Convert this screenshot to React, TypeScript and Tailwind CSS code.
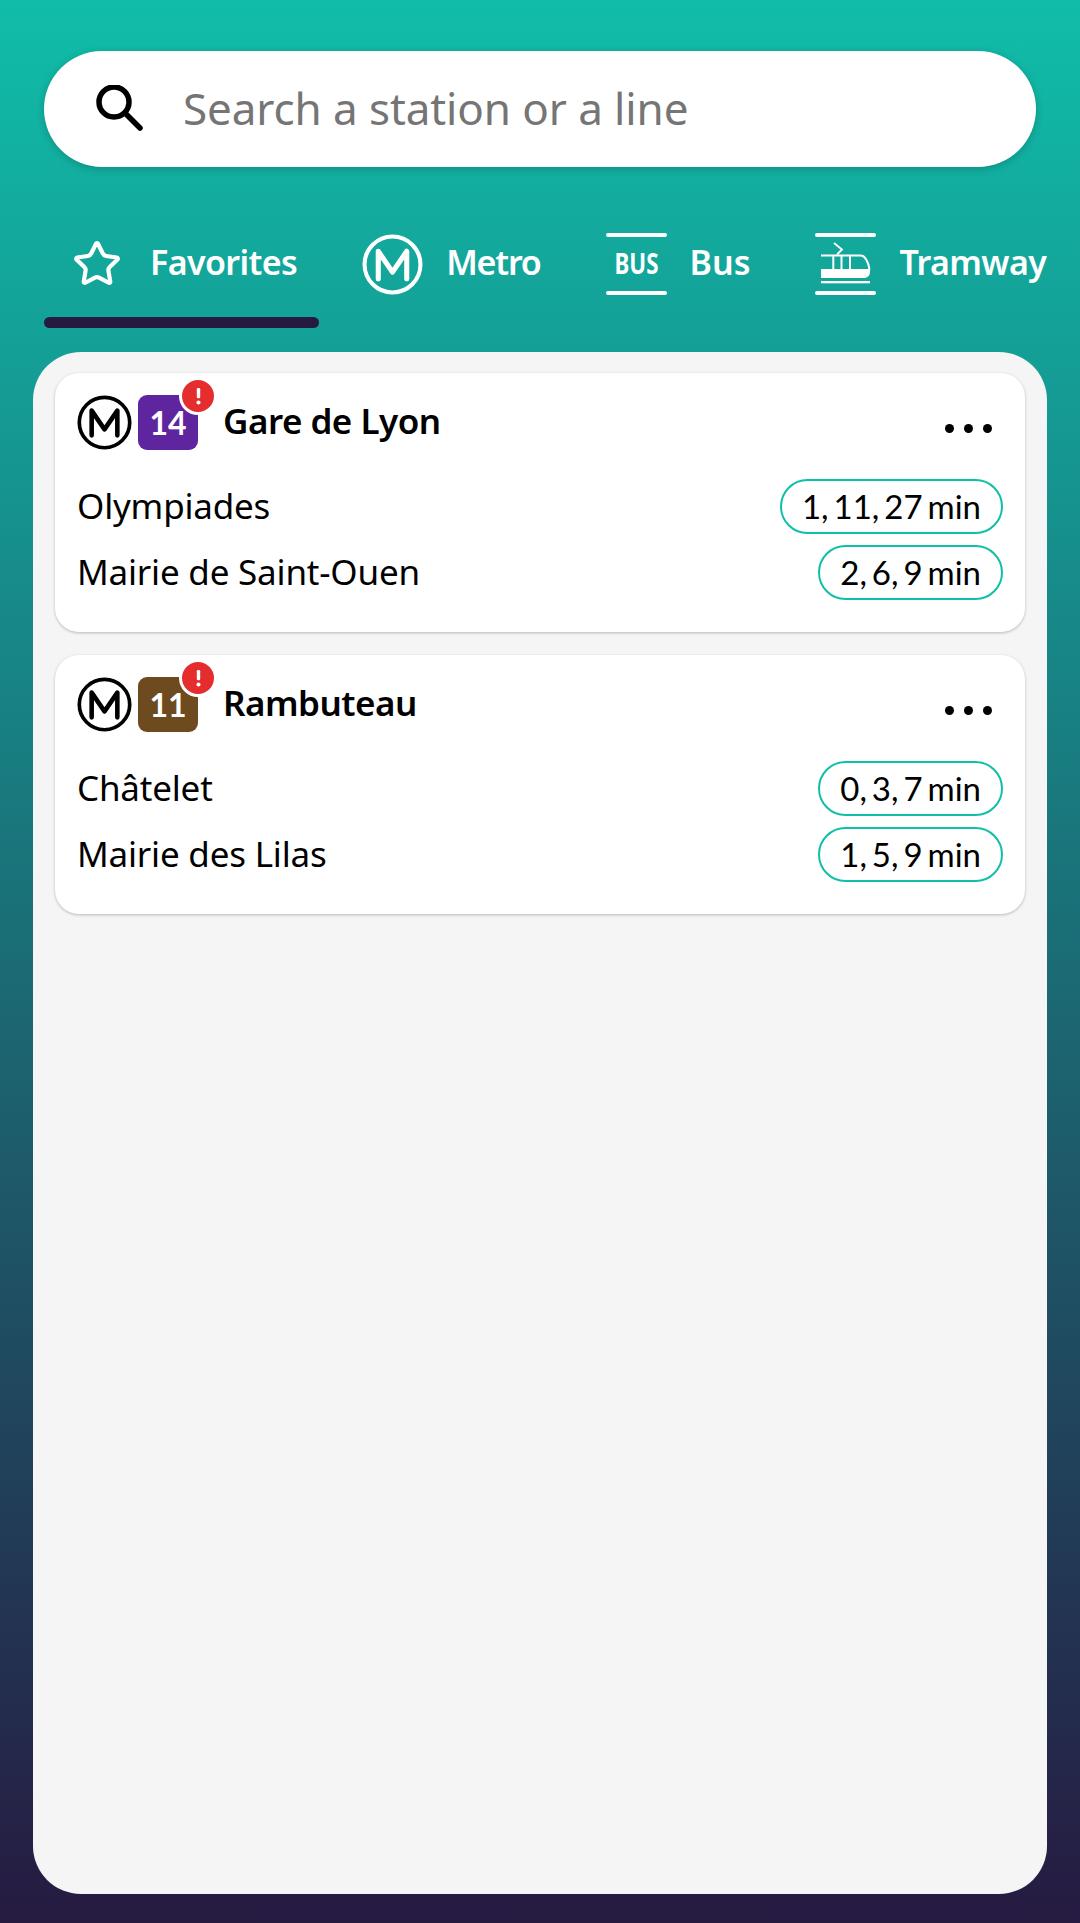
import { Star } from "lucide-react";

const MIcon = ({ color, size }: { color: string; size: number }) => (
  <svg width={size} height={size} viewBox="0 0 60 60" fill="none" className="shrink-0">
    <circle cx="30" cy="30" r="27.500" stroke={color} strokeWidth="4" />
    <path d="M16 44V17L30 37.500 44 17V44" stroke={color} strokeWidth="5" strokeLinecap="round" strokeLinejoin="round" />
  </svg>
);

const Bars = () => (
  <>
    <rect x="0" y="0" width="61" height="4" rx="2" fill="white" />
    <rect x="0" y="58" width="61" height="4" rx="2" fill="white" />
  </>
);

const BusIcon = () => (
  <svg width="61" height="62" viewBox="0 0 61 62" className="shrink-0">
    <Bars />
    <text x="8.500" y="41" fill="white" fontFamily="'Noto Sans', sans-serif" fontWeight="700" fontSize="29" textLength="44" lengthAdjust="spacingAndGlyphs">BUS</text>
  </svg>
);

const TramIcon = () => (
  <svg width="61" height="62" viewBox="0 0 61 62" fill="none" className="shrink-0">
    <Bars />
    <path d="M19 10l8 6.500-5 5" stroke="white" strokeWidth="1.800" />
    <path d="M6 22.500H46c3.500 0 7.500 6 8.500 14" stroke="white" strokeWidth="2" />
    <path d="M6 36h49v3c0 3.500-2.700 6-6 6H6z" fill="white" />
    <path d="M18.300 22v15M26.500 22v15M35 22v15" stroke="white" strokeWidth="2" />
    <rect x="6" y="48" width="49" height="2.300" fill="white" />
  </svg>
);

const Tab = ({ icon, label, active, tracking }: { icon: React.ReactNode; label: string; active?: boolean; tracking: string }) => (
  <div className="relative flex h-[62px] shrink-0 items-center gap-[23px]">
    {icon}
    <span className={`mb-[4px] whitespace-nowrap text-[34px] font-semibold leading-none text-white ${tracking}`}>{label}</span>
    {active && <div className="absolute left-[-30px] top-[84px] h-[11px] w-[275px] rounded-[6px] bg-[#261a41]" />}
  </div>
);

const Row = ({ name, times }: { name: string; times: string }) => (
  <div className="flex h-[55px] items-center justify-between">
    <span className="mb-[2px] text-[35px] leading-none tracking-[-0.2px] text-black">{name}</span>
    <span className="flex h-[55px] items-center rounded-full border-2 border-[#10bfa9] px-[20px] [font-family:Lato,sans-serif] text-[33px] leading-none text-black [word-spacing:-3.500px]">
      {times}
    </span>
  </div>
);

const Card = ({ line, color, title, rows }: { line: string; color: string; title: string; rows: [string, string][] }) => (
  <div className="rounded-[24px] bg-white px-[22px] pb-[32px] pt-[22px] shadow-[0_1px_3px_rgba(0,0,0,0.25)]">
    <div className="flex h-[55px] items-center">
      <MIcon color="black" size={55} />
      <div className="relative ml-[6px] flex h-[55px] w-[60px] items-center justify-center rounded-[9px] [font-family:Lato,sans-serif] text-[32px] font-bold leading-none text-white" style={{ backgroundColor: color }}>
        {line}
        <div className="absolute left-[41px] top-[-18px] flex h-[38px] w-[38px] items-center justify-center rounded-full border-[3px] border-white bg-[#e52d2d]">
          <svg width="7" height="17" viewBox="0 0 8 20">
            <rect x="2" y="0" width="4" height="12" rx="1.500" fill="white" />
            <circle cx="4" cy="17" r="2.400" fill="white" />
          </svg>
        </div>
      </div>
      <span className="mb-[5px] ml-[25px] text-[35px] font-semibold leading-none tracking-[-0.5px] text-black">{title}</span>
      <div className="ml-auto mr-[11px] mt-[11px] flex gap-[10px]">
        <span className="h-[9px] w-[9px] rounded-full bg-black" />
        <span className="h-[9px] w-[9px] rounded-full bg-black" />
        <span className="h-[9px] w-[9px] rounded-full bg-black" />
      </div>
    </div>
    <div className="mt-[29px] flex flex-col gap-[11px]">
      {rows.map(([n, t]) => (
        <Row key={n} name={n} times={t} />
      ))}
    </div>
  </div>
);

export default function App() {
  return (
    <div className="flex h-[1923px] w-[1080px] flex-col overflow-hidden bg-[linear-gradient(180deg,#10bda9,#261a41)] [font-family:'Noto_Sans',sans-serif]">
      <div className="mx-[44px] mt-[51px] flex h-[116px] items-center rounded-full bg-white pl-[52px] shadow-[0_2px_8px_rgba(0,0,0,0.2)]">
        <svg width="48" height="48" viewBox="0 0 48 48" fill="none" className="shrink-0">
          <circle cx="18" cy="17" r="15" stroke="black" strokeWidth="5.500" />
          <path d="M29 28l15 15" stroke="black" strokeWidth="5.500" strokeLinecap="round" />
        </svg>
        <span className="mb-[2px] ml-[39px] text-[44px] leading-none tracking-[-0.1px] text-[#757575]">Search a station or a line</span>
      </div>
      <div className="mx-[33px] mt-[66px] h-[119px] shrink-0 overflow-hidden pl-[41px]">
        <div className="flex gap-[65px]">
          <Tab tracking="tracking-[-0.6px]" icon={<div className="w-[53px] shrink-0"><Star size={50} strokeWidth={2} color="white" className="-ml-[2px]" /></div>} label="Favorites" active />
          <Tab tracking="tracking-[-1.2px]" icon={<MIcon color="white" size={61} />} label="Metro" />
          <Tab tracking="tracking-[0px]" icon={<BusIcon />} label="Bus" />
          <Tab tracking="tracking-[-0.6px]" icon={<TramIcon />} label="Tramway" />
        </div>
      </div>
      <div className="mx-[33px] flex h-[1542px] flex-col gap-[23px] rounded-[48px] bg-[#f5f5f5] px-[22px] pt-[21px]">
        <Card line="14" color="#5f259f" title="Gare de Lyon" rows={[["Olympiades", "1, 11, 27 min"], ["Mairie de Saint-Ouen", "2, 6, 9 min"]]} />
        <Card line="11" color="#6e4b1f" title="Rambuteau" rows={[["Châtelet", "0, 3, 7 min"], ["Mairie des Lilas", "1, 5, 9 min"]]} />
      </div>
    </div>
  );
}
